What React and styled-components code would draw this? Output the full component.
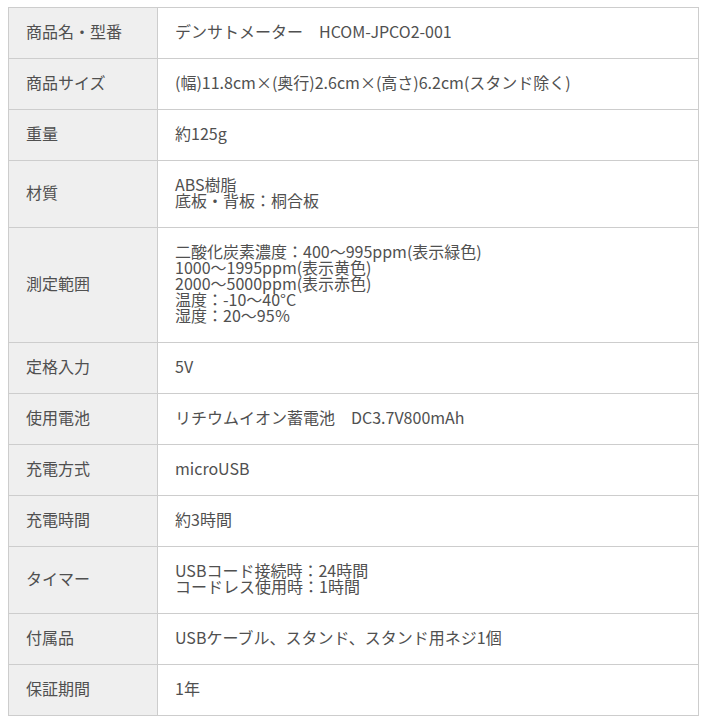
import React from "react";
import styled, { createGlobalStyle } from "styled-components";

const GlobalStyle = createGlobalStyle`
  body {
    margin: 0;
    background: #fff;
    font-family: "Noto Sans CJK JP", "Noto Sans", sans-serif;
  }
`;

const Page = styled.div`
  padding: 7px 0 0 8px;
`;

const SpecTable = styled.table`
  width: 691px;
  border-collapse: collapse;
  table-layout: fixed;
  color: #505050;
  font-size: 16px;
  line-height: 16px;
`;

const Head = styled.th`
  width: 114px;
  background: #efefef;
  border: 1px solid #cdcdcd;
  padding: 15px 17px 19px;
  text-align: left;
  font-weight: 400;
  vertical-align: middle;
`;

const Cell = styled.td`
  border: 1px solid #cdcdcd;
  padding: 15px 17px 19px;
  vertical-align: middle;
  white-space: pre-line;
`;

const rows = [
  ["商品名・型番", "デンサトメーター\u3000HCOM-JPCO2-001"],
  ["商品サイズ", "(幅)11.8cm×(奥行)2.6cm×(高さ)6.2cm(スタンド除く)"],
  ["重量", "約125g"],
  ["材質", "ABS樹脂\n底板・背板：桐合板"],
  [
    "測定範囲",
    "二酸化炭素濃度：400〜995ppm(表示緑色)\n1000〜1995ppm(表示黄色)\n2000〜5000ppm(表示赤色)\n温度：-10〜40°C\n湿度：20〜95％",
  ],
  ["定格入力", "5V"],
  ["使用電池", "リチウムイオン蓄電池\u3000DC3.7V800mAh"],
  ["充電方式", "microUSB"],
  ["充電時間", "約3時間"],
  ["タイマー", "USBコード接続時：24時間\nコードレス使用時：1時間"],
  ["付属品", "USBケーブル、スタンド、スタンド用ネジ1個"],
  ["保証期間", "1年"],
];

export default function App() {
  return (
    <>
      <GlobalStyle />
      <Page>
        <SpecTable>
          <tbody>
            {rows.map(([label, value]) => (
              <tr key={label}>
                <Head>{label}</Head>
                <Cell>{value}</Cell>
              </tr>
            ))}
          </tbody>
        </SpecTable>
      </Page>
    </>
  );
}
